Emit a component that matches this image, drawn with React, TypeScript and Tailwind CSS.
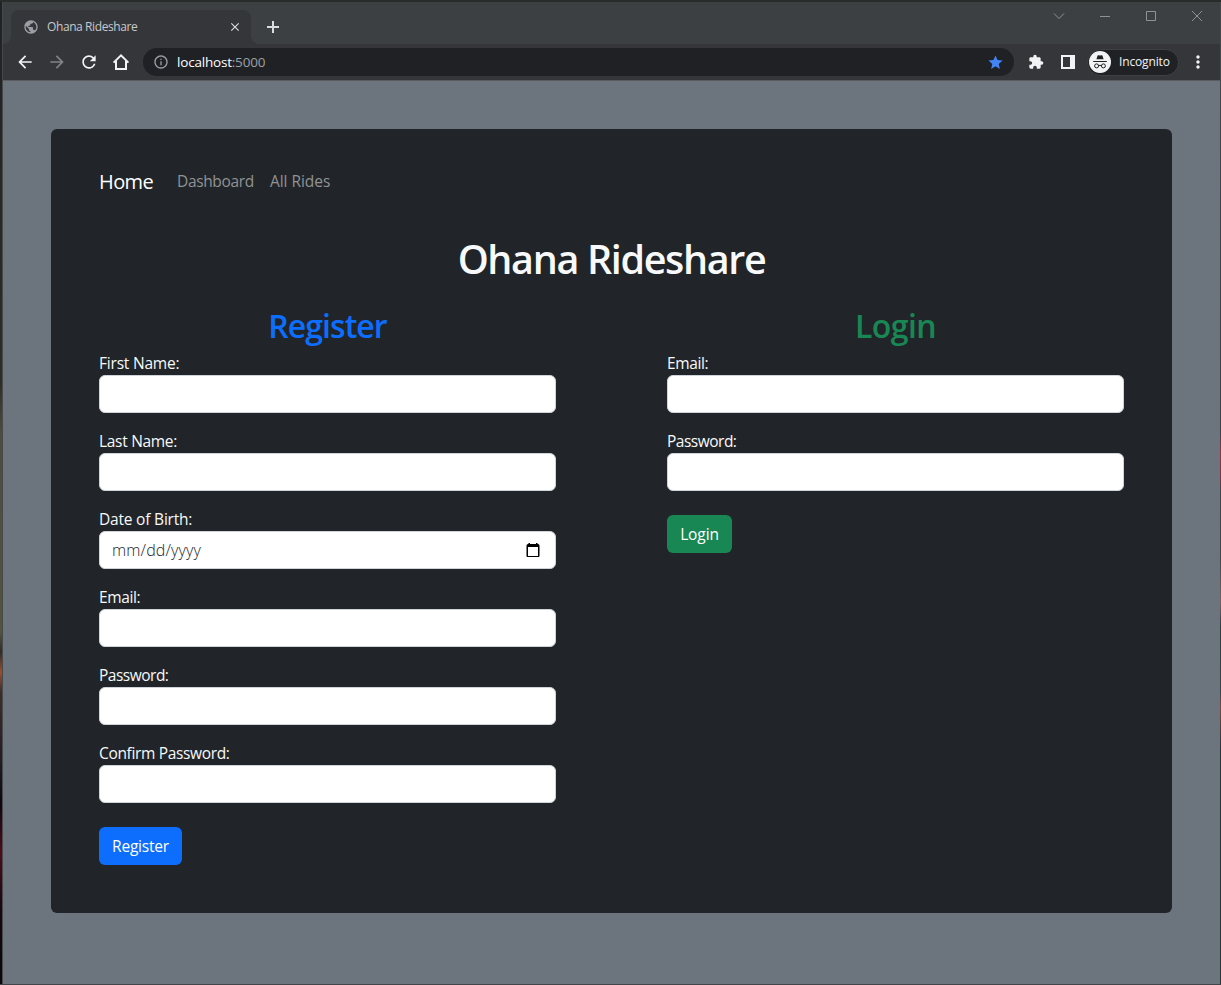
import type { ReactNode } from "react";
import {
  MdArrowBack,
  MdArrowForward,
  MdRefresh,
  MdInfoOutline,
  MdStar,
  MdExtension,
  MdPublic,
  MdMoreVert,
  MdClose,
  MdAdd,
} from "react-icons/md";

function WindowControls() {
  return (
    <div className="ml-auto flex h-[28px] items-center text-[#8f9294]">
      <svg className="mr-[34px]" width="12" height="12" fill="none" stroke="currentColor">
        <path d="M1 3.5 L6 8.5 L11 3.5" />
      </svg>
      <svg className="mr-[34px]" width="12" height="12" fill="none" stroke="currentColor">
        <path d="M1 6.5 H11" />
      </svg>
      <svg className="mr-[34px]" width="12" height="12" fill="none" stroke="currentColor">
        <path d="M1.5 1.5 h9 v9 h-9 z" />
      </svg>
      <svg className="mr-[17px]" width="12" height="12" fill="none" stroke="currentColor">
        <path d="M1 1 L11 11 M11 1 L1 11" />
      </svg>
    </div>
  );
}

function TabStrip() {
  return (
    <div className="flex h-[42px] bg-[#3c4043]">
      <svg className="mt-[34px] shrink-0" width="8" height="8">
        <path d="M8 0 V8 H0 A8 8 0 0 0 8 0 Z" fill="#35363a" />
      </svg>
      <div className="mt-[8px] flex h-[34px] w-[240px] shrink-0 items-center rounded-t-lg bg-[#35363a] pr-[9px] pl-[12px]">
        <MdPublic className="h-[16px] w-[16px] text-[#9aa0a6]" />
        <span className="ml-[8px] text-[12px] leading-[16px] tracking-[-0.4px] text-[#c6c9cc]">Ohana Rideshare</span>
        <MdClose className="ml-auto h-[14px] w-[14px] text-[#dadce0]" />
      </div>
      <svg className="mt-[34px] shrink-0" width="8" height="8">
        <path d="M0 0 V8 H8 A8 8 0 0 1 0 0 Z" fill="#35363a" />
      </svg>
      <svg className="mt-[19px] ml-[8px] text-[#dadce0]" width="12" height="12" fill="none" stroke="currentColor" strokeWidth="2">
        <path d="M6 0 V12 M0 6 H12" />
      </svg>
      <WindowControls />
    </div>
  );
}

function IncognitoBadge() {
  return (
    <div className="ml-[12px] flex h-[27px] w-[92px] items-center rounded-full border border-[#3e4043] bg-[#202124] pl-[1px]">
      <svg width="22" height="22" viewBox="0 0 22 22" className="shrink-0">
        <circle cx="11" cy="11" r="11" fill="#f1f3f4" />
        <path d="M7.4 8.3 L8.6 4.5 Q8.8 4 9.5 4.2 L11 4.6 L12.5 4.2 Q13.2 4 13.4 4.5 L14.6 8.3 Z M4.2 10 H17.8 V11 H4.2 Z" fill="#202124" />
        <g fill="none" stroke="#202124" strokeWidth="1">
          <circle cx="7.6" cy="14.9" r="2" />
          <circle cx="14.4" cy="14.9" r="2" />
          <path d="M9.6 14.7 Q11 13.9 12.4 14.7" />
        </g>
      </svg>
      <span className="ml-[8px] text-[12px] leading-[16px] tracking-[-0.15px] text-[#f1f3f4]">Incognito</span>
    </div>
  );
}

function Toolbar() {
  return (
    <div className="flex h-[36px] items-center bg-[#35363a] pl-[12px] text-[#f1f3f4]">
      <MdArrowBack className="mr-[12px] h-[20px] w-[20px]" />
      <MdArrowForward className="mr-[12px] h-[20px] w-[20px] text-[#828386]" />
      <MdRefresh className="mr-[12px] h-[20px] w-[20px]" />
      <svg className="mr-[12px]" width="20" height="20" fill="none" stroke="currentColor" strokeWidth="2">
        <path d="M2.6 10.6 L10 3.4 L17.4 10.6 M5 9 V17 H15 V9" />
      </svg>
      <div className="flex h-[28px] w-[871px] items-center rounded-full bg-[#202124] pr-[10px] pl-[10px]">
        <MdInfoOutline className="h-[16px] w-[16px] text-[#9aa0a6]" />
        <span className="ml-[8px] text-[13.5px] leading-[20px] tracking-[-0.2px] text-white">
          localhost<span className="text-[#9aa0a6]">:5000</span>
        </span>
        <MdStar className="ml-auto h-[17px] w-[17px] text-[#4285f4]" />
      </div>
      <MdExtension className="ml-[14px] h-[16px] w-[16px]" />
      <svg className="ml-[17px]" width="14" height="14">
        <path d="M0 0 H14 V14 H0 Z M2 2 V12 H9 V2 Z" fill="currentColor" fillRule="evenodd" />
      </svg>
      <IncognitoBadge />
      <MdMoreVert className="ml-[9px] h-[20px] w-[20px]" />
    </div>
  );
}

function Field({ label, tracking = "tracking-[-0.4px]", children }: { label: string; tracking?: string; children?: ReactNode }) {
  return (
    <label className="mb-4 block">
      <span className={`block h-[24px] text-[15.5px] leading-[25px] ${tracking}`}>{label}</span>
      <span className="flex h-[38px] items-center rounded-md border border-[#ced4da] bg-white px-3 text-[#212529]">
        {children}
      </span>
    </label>
  );
}

function DatePlaceholder() {
  return (
    <>
      <span className="text-[16px] font-light tracking-[0.15px]">mm/dd/yyyy</span>
      <svg className="mr-[3px] ml-auto" width="14" height="15">
        <path d="M2.5 0 H4 V1 H10 V0 H11.5 V1 H12 Q13.5 1 13.5 2.5 V13 Q13.5 14 12.5 14 H1.5 Q.5 14 .5 13 V2.5 Q.5 1 2 1 H2.5 Z M2 4 V13 H12 V4 Z" fill="#000" fillRule="evenodd" />
      </svg>
    </>
  );
}

function Card() {
  return (
    <main className="mx-[48px] mt-[48px] h-[784px] rounded-md bg-[#212529] px-12 text-[#f8f9fa]">
      <nav className="flex h-[106px] items-center">
        <a className="w-[78px] text-[20px] leading-[30px] tracking-[-0.6px] text-white">Home</a>
        <a className="mb-[2px] w-[93px] text-[15.5px] leading-[24px] tracking-[-0.35px] text-[#909294]">Dashboard</a>
        <a className="mb-[2px] text-[15.5px] leading-[24px] tracking-[-0.05px] text-[#909294]">All Rides</a>
      </nav>
      <h1 className="h-[72px] text-center text-[39.5px] leading-[48px] font-semibold tracking-[-1.35px]">Ohana Rideshare</h1>
      <div className="flex justify-between">
        <section className="w-[457px]">
          <h2 className="h-[44px] text-center text-[32px] leading-[38px] font-semibold tracking-[-0.95px] text-[#0d6efd]">Register</h2>
          <Field label="First Name:" tracking="tracking-[-0.2px]" />
          <Field label="Last Name:" tracking="tracking-[-0.3px]" />
          <Field label="Date of Birth:" tracking="tracking-[-0.2px]"><DatePlaceholder /></Field>
          <Field label="Email:" />
          <Field label="Password:" tracking="tracking-[-0.5px]" />
          <Field label="Confirm Password:" tracking="tracking-[-0.34px]" />
          <button className="mt-2 h-[38px] w-[83px] rounded-md bg-[#0d6efd] pt-[2px] text-[15.5px] tracking-[-0.2px] text-white">Register</button>
        </section>
        <section className="w-[457px]">
          <h2 className="h-[44px] text-center text-[32px] leading-[38px] font-semibold tracking-[-0.6px] text-[#198754]">Login</h2>
          <Field label="Email:" />
          <Field label="Password:" tracking="tracking-[-0.5px]" />
          <button className="mt-2 h-[38px] w-[65px] rounded-md bg-[#198754] pt-[2px] text-[15.5px] tracking-[-0.1px] text-white">Login</button>
        </section>
      </div>
    </main>
  );
}

export default function App() {
  return (
    <div className="flex h-[985px] w-[1221px] flex-col overflow-hidden border-t-2 border-b border-t-[#2a2c2b] border-b-[#42464a] font-['Open_Sans',sans-serif]">
      <div className="flex min-h-0 flex-1">
        <div className="w-[2px] shrink-0 bg-[linear-gradient(180deg,#202322_0px,#2b2d28_380px,#4d4c3d_430px,#55523f_630px,#302c27_650px,#9a4e30_670px,#3c2d2b_690px,#241c23_760px,#0d0710_800px,#500b1c_850px,#160710_910px,#09080b_980px)]" />
        <div className="w-px shrink-0 bg-[#45494c]" />
        <div className="flex w-[1217px] shrink-0 flex-col bg-[#6c757d]">
          <TabStrip />
          <Toolbar />
          <div className="h-px shrink-0 bg-[#5b5c5f]" />
          <Card />
        </div>
        <div className="w-px bg-[linear-gradient(180deg,#45494c_0px,#3b4346_430px,#8d3545_450px,#7d3444_475px,#434648_490px,#45494c_560px,#756461_600px,#303c42_625px,#3b4448_690px,#744a42_705px,#263238_750px,#29343a_980px)]" />
      </div>
    </div>
  );
}
